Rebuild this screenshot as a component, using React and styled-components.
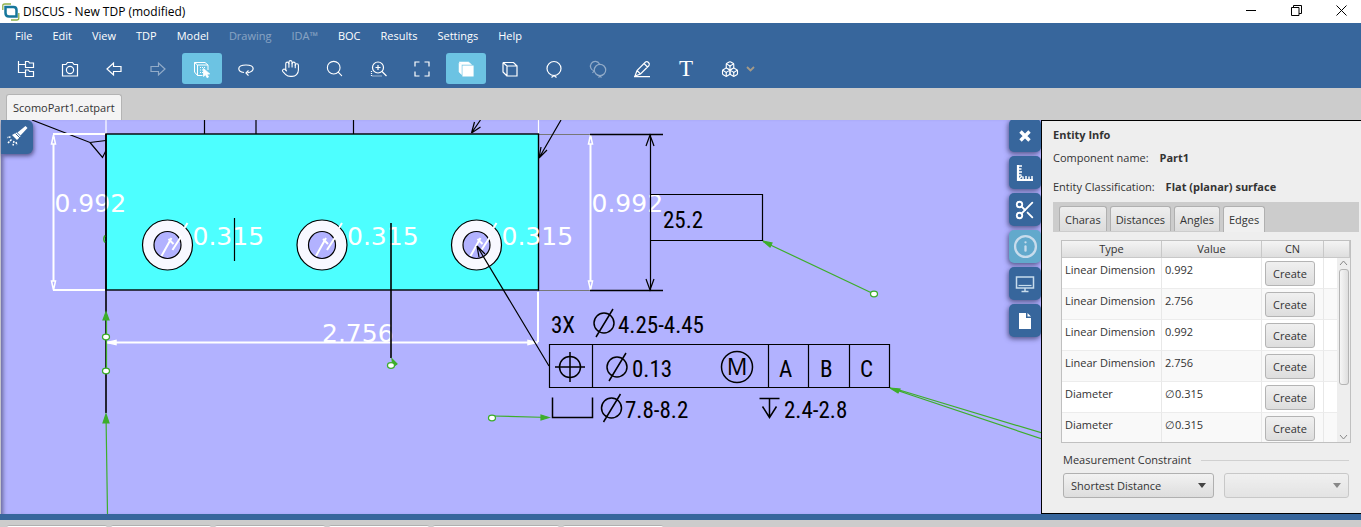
import styled, { createGlobalStyle } from "styled-components"
import { Boxes, Hand, Search, Scissors, Info } from "lucide-react"

const colors = {
  blue: '#37669c',
  active: '#6cc3e3',
  scene: '#b2b2ff',
  face: '#4dffff',
  green: '#3dae2b',
  text: '#333333',
}

const uiFont = '"Open Sans", "Noto Sans", sans-serif'
const noteFont = '"Roboto Condensed", "Open Sans Condensed", Roboto, sans-serif'

const menus = [
  { label: 'File' },
  { label: 'Edit' },
  { label: 'View' },
  { label: 'TDP' },
  { label: 'Model' },
  { label: 'Drawing', disabled: true },
  { label: 'IDA™', disabled: true },
  { label: 'BOC' },
  { label: 'Results' },
  { label: 'Settings' },
  { label: 'Help' },
]

const edges = [
  { type: 'Linear Dimension', value: '0.992' },
  { type: 'Linear Dimension', value: '2.756' },
  { type: 'Linear Dimension', value: '0.992' },
  { type: 'Linear Dimension', value: '2.756' },
  { type: 'Diameter', value: '∅0.315' },
  { type: 'Diameter', value: '∅0.315' },
]

const bottomTabs = [100, 100, 110, 100, 126, 100]

const Icon = ({ size = 20, children }) => (
  <svg width={size} height={size} viewBox="0 0 20 20" fill="none" stroke="currentColor" strokeWidth="1.2">
    {children}
  </svg>
)

const tools = [
  {
    label: 'Tree',
    icon: <Icon><path d="M2.5 2v11.500h7M2.500 5.500h7M9.500 2.500h3l1 1.500h4v4.500h-8zM9.500 11h3l1 1.500h4v5h-8z" /></Icon>,
  },
  {
    label: 'Snapshot',
    icon: <Icon><path d="M2.500 5.500h3.500l1.500-2h5l1.500 2h3.500v11.500h-15z" /><circle cx="10" cy="11" r="3.600" /></Icon>,
  },
  { label: 'Back', icon: <Icon><path d="M3 10l6.500-6v3.500h7.500v5h-7.500v3.500z" /></Icon> },
  { label: 'Forward', disabled: true, icon: <Icon><path d="M17 10l-6.500-6v3.500h-7.500v5h7.500v3.500z" /></Icon> },
  {
    label: 'Select',
    active: true,
    icon: (
      <Icon>
        <path d="M2.500 3.500l3 2.500h10.500l-3-2.500zM2.500 3.500v9.500l3 3.500M5.500 6v10.500h5M16 6v5" strokeWidth="1" />
        <path d="M8 8.500h6M8 11h3M8 13.500h3" strokeDasharray="1 1" />
        <path d="M11.500 9.500v8l2-1.700 1.600 3 1.400-.8-1.500-2.800 2.700-.3z" fill="currentColor" strokeWidth=".8" />
      </Icon>
    ),
  },
  {
    label: 'Rotate',
    icon: <Icon><path d="M8 13.500c-7-1-7.500-7.500 2-7.500s9 6.500 1.500 7.800" /><path d="M12.500 11.500l-2.500 2.500 2.500 2.700" /></Icon>,
  },
  { label: 'Pan', icon: <Hand size={19} strokeWidth={1.4} /> },
  { label: 'Zoom', icon: <Search size={19} strokeWidth={1.4} /> },
  {
    label: 'Zoom area',
    icon: (
      <Icon>
        <circle cx="10" cy="8.500" r="5.500" />
        <path d="M10 6v5M7.500 8.500h5M14 12.500l4.500 4.500" />
        <path d="M3.500 12v5h11" strokeDasharray="1 1" />
      </Icon>
    ),
  },
  { label: 'Fit', icon: <Icon><path d="M3 7.500V3h4.500M12.500 3H17v4.500M17 12.500V17h-4.500M7.500 17H3v-4.500" /></Icon> },
  {
    label: 'Shaded',
    active: true,
    icon: (
      <Icon>
        <path d="M7 7h10v10h-10z" fill="currentColor" />
        <path d="M3 3h9.500l3 2.500h-10zM3 4v9l2.500 2.500v-10z" fill="currentColor" strokeWidth=".5" />
      </Icon>
    ),
  },
  {
    label: 'Wireframe',
    icon: <Icon><path d="M7 7h10v10h-10zM3 3.500h10.500l3.500 3.500M3 3.500l4 3.500M3 3.500v9.500l4 4" /></Icon>,
  },
  { label: 'Balloon', icon: <Icon><circle cx="10" cy="9.500" r="7" /><path d="M7.500 18.500l2.500-2 2.500 2" /></Icon> },
  {
    label: 'Balloons',
    disabled: true,
    icon: (
      <Icon>
        <circle cx="12" cy="11" r="5.700" />
        <path d="M6.500 12a4.800 4.800 0 1 1 5-7M6 12l-1.500 2M10.500 18.500l1.500-1.500 1.500 1.500" />
      </Icon>
    ),
  },
  { label: 'Edit note', icon: <Icon><path d="M3 17l2-5.500 8.500-8.500q1.500-1 3 .5t.5 3L8.500 15zM12 4.500l3.500 3.500M5 11.500l3.500 3.500M2 17.700h16" /></Icon> },
  { label: 'Text', letter: true },
  { label: 'Assembly', icon: <Boxes size={18} strokeWidth={1.5} /> },
]

const sideTools = [
  {
    label: 'Close',
    icon: <Icon><path d="M5.500 5.500l9 9M14.500 5.500l-9 9" strokeWidth="3.400" /></Icon>,
  },
  {
    label: 'Measure',
    icon: (
      <Icon>
        <path d="M3 2v15h15" strokeWidth="2.200" />
        <path d="M4 3h3M4 6h2.500M4 9h3M4 12h2.500M8 16v-2.500M11 16v-3M14 16v-2.500M17 16v-3M3 17l4-4" strokeWidth="1.500" />
      </Icon>
    ),
  },
  {
    label: 'Section',
    icon: <Scissors size={22} strokeWidth={2} />,
  },
  { label: 'Info', active: true, icon: <Info size={25} strokeWidth={2.2} /> },
  {
    label: 'Display',
    dim: true,
    icon: <Icon><path d="M1.500 3h17v11h-17zM6.500 17.500h7M10 14v3" strokeWidth="1.500" /><path d="M3.500 11.500h13" /></Icon>,
  },
  {
    label: 'Document',
    icon: <Icon><path d="M4 2h7v5h5v11h-12zM12.500 2v3.500h3.500z" fill="currentColor" stroke="none" /></Icon>,
  },
]

const Logo = () => (
  <svg width="18" height="18" viewBox="0 0 18 18" fill="none">
    <path d="M.800 7V2.500q0-1.500 2-1.500H9M16.800 10v5q0 2-2 2H9" stroke="#8fb04a" strokeWidth="1.300" />
    <path d="M3.500 4h8q3 0 3 3v6.500h-7.500q-3.500 0-3.500-3.500z" stroke="#16779c" strokeWidth="2.500" />
  </svg>
)

const LinearDim = ({ x, label }) => (
  <g>
    <path d={`M${x} 137V287`} stroke="#fff" strokeWidth="2" />
    <path d={`M${x - 2} 144L${x} 135l2 9zM${x - 2} 281l2 9 2-9z`} fill={colors.scene} stroke="#fff" strokeWidth="1.500" />
    <SceneText x={x + 1} y="212">{label}</SceneText>
  </g>
)

const Hole = ({ x }) => (
  <g>
    <circle cx={x} cy="245" r="25" fill="#f8f8ff" stroke="#000" strokeWidth="1.200" />
    <circle cx={x} cy="245" r="13.500" fill={colors.scene} stroke="#000" strokeWidth="1.200" />
    <path d={`M${x - 6} 256l10-18M${x + 1} 239l5 5M${x + 5} 250l9-14M${x + 17} 228l3-5`} stroke="#fff" strokeWidth="2" />
    <SceneText x={x + 25} y="245">0.315</SceneText>
  </g>
)

const DiameterSign = ({ x, y }) => (
  <path
    d={`M${x - 10} ${y}a10 10 0 1 0 20 0a10 10 0 1 0 -20 0M${x - 8} ${y + 14}L${x + 9} ${y - 14}`}
    fill="none"
    stroke="#000"
    strokeWidth="1.500"
  />
)

const Anchor = ({ x, y }) => (
  <ellipse cx={x} cy={y} rx="3.500" ry="2.800" fill="#fff" stroke={colors.green} strokeWidth="1.300" />
)

const Scene = () => (
  <SceneSvg viewBox="0 120 1041 394" preserveAspectRatio="xMinYMin slice">
    <g fill="none" stroke="#000" strokeWidth="1.200">
      <path d="M32 120L90 142.500l16-2M90 142.500l12.500 15 3.500-7" />
      <path d="M204.500 120v14M256 120v14M353.500 120v14" />
      <path d="M106 120v14M538.500 120v14" stroke="#fff" />
      <path d="M538 134.500h52M538 290.500h52" stroke="#777" />
    </g>
    <rect x="106" y="134" width="432.500" height="156" fill={colors.face} stroke="#000" strokeWidth="1.400" />

    <g stroke="#fff" strokeWidth="2" fill="#fff">
      <path d="M53 134h52M53 290h52M538 292v50M107 342.500h431" />
      <path d="M107 342.500l9-2v4zM537 342.500l-9-2v4z" strokeWidth="1.500" />
    </g>
    <LinearDim x={53.5} label="0.992" />
    <LinearDim x={590.5} label="0.992" />
    <SceneText x="322" y="342">2.756</SceneText>
    <Hole x={167.5} />
    <Hole x={322} />
    <Hole x={476.5} />

    <g fill="none" stroke="#000" strokeWidth="1.200">
      <path d="M106 134v279" strokeWidth="1.600" />
      <path d="M234.500 218v43" />
      <path d="M391 223v135" strokeWidth="1.600" />
      <path d="M480.500 120l-9 13 3-11M471.500 133l9-6" />
      <path d="M561 120l-22 38 2-11M539 158l8-8" />
      <path d="M549 366L477 246l2 11M477 246l8 8" />
      <path d="M590 134.500h73M590 290.500h73" strokeWidth="1.500" />
      <path d="M650.500 135v155M646 146l4-11 4 11M646 279l4 11 4-11" />
      <path d="M650.500 194.500h112v46h-112" />
      <path d="M549.500 344.500h340v43h-340zM592.500 344.500v43M768.500 344.500v43M808.500 344.500v43M849.500 344.500v43" />
    </g>

    <g fill="none" stroke="#000" strokeWidth="1.500">
      <circle cx="570" cy="367" r="10.500" />
      <path d="M555 367h30M570 352v30" />
      <circle cx="737" cy="367" r="15.500" />
      <path d="M552.500 397.500v20h40v-20" />
      <path d="M759.500 398.500h20M769.500 399v19M762.500 406.500l7 11 7-11" />
    </g>
    <DiameterSign x={604} y={323} />
    <DiameterSign x={617} y={367} />
    <DiameterSign x={611.5} y={408} />

    <NoteText x="663" y="228">25.2</NoteText>
    <NoteText x="551" y="333">3X</NoteText>
    <NoteText x="618" y="333">4.25-4.45</NoteText>
    <NoteText x="632" y="377">0.13</NoteText>
    <ModifierText x="737" y="375">M</ModifierText>
    <NoteText x="779" y="377">A</NoteText>
    <NoteText x="820" y="377">B</NoteText>
    <NoteText x="860" y="377">C</NoteText>
    <NoteText x="625" y="418">7.8-8.2</NoteText>
    <NoteText x="784" y="418">2.4-2.8</NoteText>

    <g stroke={colors.green} strokeWidth="1.200" fill={colors.green}>
      <path d="M763 241.500L874 294M492 416l57 1.500M890 388l152 51M896 389l146 44" />
      <path d="M763 241l9 2-2 4zM549 417.500l-8-2.500v5zM890 388l10 1-2 4z" />
      <path d="M107.500 514l-1.500-100M106 414l-3 9h6zM106 312l-3 8h6zM106.500 320v51M392 359l5 5-4 3z" />
    </g>
    <path d="M105 235.500q-2.500 3.500 0 7" fill="none" stroke={colors.green} strokeWidth="1.500" />
    <Anchor x={874} y={294} />
    <Anchor x={492} y={418} />
    <Anchor x={106} y={337} />
    <Anchor x={106} y={371} />
    <Anchor x={391} y={365.5} />
  </SceneSvg>
)

const EntityPanel = () => (
  <Panel>
    <PanelTitle>Entity Info</PanelTitle>
    <Field>Component name: <b>Part1</b></Field>
    <Field>Entity Classification: <b>Flat (planar) surface</b></Field>
    <TabStrip>
      <PanelTab>Charas</PanelTab>
      <PanelTab>Distances</PanelTab>
      <PanelTab>Angles</PanelTab>
      <PanelTab $selected>Edges</PanelTab>
    </TabStrip>
    <TableBox>
      <EdgeTable>
        <colgroup>
          <col width="100" />
          <col width="100" />
          <col width="62" />
          <col />
        </colgroup>
        <thead>
          <tr><th>Type</th><th>Value</th><th>CN</th><th /></tr>
        </thead>
        <tbody>
          {edges.map((edge, i) => (
            <tr key={i}>
              <td>{edge.type}</td>
              <td>{edge.value}</td>
              <td><CreateButton>Create</CreateButton></td>
              <td />
            </tr>
          ))}
        </tbody>
      </EdgeTable>
      <ScrollBar>
        <svg width="9" height="6" viewBox="0 0 9 6"><path d="M1 5l3.500-4L8 5" /></svg>
        <ScrollThumb />
        <svg width="9" height="6" viewBox="0 0 9 6"><path d="M1 1l3.500 4L8 1" /></svg>
      </ScrollBar>
    </TableBox>
    <Constraint>
      <Legend><label htmlFor="constraint">Measurement Constraint</label></Legend>
      <SelectRow>
        <SelectBox $grow={6}>
          <select id="constraint"><option>Shortest Distance</option></select>
          <svg width="8" height="5" viewBox="0 0 8 5"><path d="M0 0h8L4 5z" /></svg>
        </SelectBox>
        <SelectBox $grow={5} $disabled>
          <select aria-label="Constraint target" disabled />
          <svg width="8" height="5" viewBox="0 0 8 5"><path d="M0 0h8L4 5z" /></svg>
        </SelectBox>
      </SelectRow>
    </Constraint>
  </Panel>
)

const App = () => {
  return (
    <Window>
      <GlobalStyle />
      <TitleBar>
        <Logo />
        <h1>DISCUS - New TDP (modified)</h1>
        <WindowButton aria-label="Minimize">
          <svg width="11" height="11" viewBox="0 0 11 11"><path d="M0 5.500h10" /></svg>
        </WindowButton>
        <WindowButton aria-label="Restore">
          <svg width="11" height="11" viewBox="0 0 11 11"><path d="M.500 2.500h7.500v8h-7.500zM2.500 2.500v-2h8v8h-2.500" /></svg>
        </WindowButton>
        <WindowButton aria-label="Close">
          <svg width="11" height="11" viewBox="0 0 11 11"><path d="M.500.500l10 10M10.500.500l-10 10" /></svg>
        </WindowButton>
      </TitleBar>
      <Header>
        <MenuBar>
          {menus.map((menu) => (
            <MenuItem key={menu.label} disabled={menu.disabled}>{menu.label}</MenuItem>
          ))}
        </MenuBar>
        <ToolBar>
          {tools.map((tool) => (
            <ToolButton key={tool.label} aria-label={tool.label} disabled={tool.disabled} $active={tool.active}>
              {tool.letter ? <ToolLetter>T</ToolLetter> : tool.icon}
            </ToolButton>
          ))}
          <MoreButton aria-label="More">
            <svg width="9" height="6" viewBox="0 0 9 6" fill="none" stroke="#a49a88" strokeWidth="1.800"><path d="M1 1l3.500 3.500L8 1" /></svg>
          </MoreButton>
        </ToolBar>
      </Header>
      <FileTabs>
        <FileTab>ScomoPart1.catpart</FileTab>
      </FileTabs>
      <Main>
        <Viewport>
          <Scene />
          <LightButton aria-label="Light">
            <svg width="24" height="24" viewBox="0 0 24 24" fill="#fff" stroke="#fff">
              <path d="M20.500 2l2 2-7 7.500-3-3z" stroke="none" />
              <path d="M11.500 8.500l4 4-3.500 3.500-5-5z" stroke="none" />
              <path d="M10.500 9.500l4.500 4.500" stroke={colors.blue} />
              <path d="M5.500 13l-3.500.5M6.500 15.500l-4 4M9 17l-1 4.500M11 18l1 3" strokeWidth="1.500" strokeDasharray="2 1" />
            </svg>
          </LightButton>
          <SideTools>
            {sideTools.map((tool) => (
              <SideButton key={tool.label} aria-label={tool.label} $active={tool.active} $dim={tool.dim}>
                {tool.icon}
              </SideButton>
            ))}
          </SideTools>
        </Viewport>
        <EntityPanel />
      </Main>
      <BottomTabs>
        {bottomTabs.map((width, i) => <BottomTab key={i} $width={width} />)}
      </BottomTabs>
    </Window>
  )
}

const GlobalStyle = createGlobalStyle`
  * {
    box-sizing: border-box;
  }

  body {
    margin: 0;
    overflow: hidden;
    font-family: ${uiFont};
    font-size: 11px;
    color: ${colors.text};
  }

  button, select {
    font: inherit;
    color: inherit;
    padding: 0;
    border: 0;
    background: none;
  }
`

const Window = styled.div`
  display: flex;
  flex-direction: column;
  height: 100vh;
  background: #cccccc;
`

const TitleBar = styled.header`
  display: flex;
  align-items: center;
  gap: 10px;
  height: 23px;
  padding: 0 2px;
  background: #fff;
  color: #000;

  h1 {
    flex: 1;
    margin: 0 0 0 -7px;
    font-size: 12px;
    font-weight: 400;
  }
`

const WindowButton = styled.button`
  width: 35px;
  height: 20px;

  svg {
    display: block;
    margin: 0 auto 2px;
    fill: none;
    stroke: #000;
  }
`

const Header = styled.div`
  height: 65px;
  background: ${colors.blue};
  color: #fff;
`

const MenuBar = styled.nav`
  display: flex;
  gap: 20px;
  height: 25px;
  padding: 0 15px;
`

const MenuItem = styled.button`
  opacity: ${(props) => (props.disabled ? 0.4 : 1)};
`

const ToolBar = styled.div`
  display: flex;
  gap: 4px;
  padding: 5px 6px;
`

const ToolButton = styled.button`
  display: flex;
  align-items: center;
  justify-content: center;
  width: 40px;
  height: 31px;
  border-radius: 3px;
  background: ${(props) => (props.$active ? colors.active : 'transparent')};
  opacity: ${(props) => (props.disabled ? 0.45 : 1)};
`

const ToolLetter = styled.span`
  font-family: "Liberation Serif", "DejaVu Serif", serif;
  font-size: 23px;
  line-height: 22px;
`

const MoreButton = styled.button`
  display: flex;
  align-items: center;
  margin-left: -8px;
`

const FileTabs = styled.div`
  display: flex;
  align-items: flex-end;
  height: 32px;
  padding: 0 6px;
`

const FileTab = styled.button`
  height: 26px;
  padding: 0 6px;
  border: 1px solid #b4b4b4;
  border-bottom: 0;
  border-radius: 3px 3px 0 0;
  background: #f4f4f4;
`

const Main = styled.main`
  display: flex;
  flex: 1;
  min-height: 0;
  border-bottom: 6px solid ${colors.blue};
`

const Viewport = styled.section`
  position: relative;
  flex: 1;
  min-width: 0;
  overflow: hidden;
  background: ${colors.scene};

  &::after {
    content: "";
    position: absolute;
    inset: 0;
    border-left: 1px solid #c4c4cc;
    box-shadow: inset 5px 0 4px -3px #66669a;
    pointer-events: none;
  }
`

const SceneSvg = styled.svg`
  display: block;
  width: 100%;
  height: 100%;
`

const SceneText = styled.text`
  font-family: "DejaVu Sans", sans-serif;
  font-size: 25px;
  fill: #fff;
`

const NoteText = styled.text`
  font-family: ${noteFont};
  font-size: 23px;
  fill: #000;
`

const ModifierText = styled.text`
  font-family: ${uiFont};
  font-size: 23px;
  text-anchor: middle;
  fill: #000;
`

const LightButton = styled.button`
  position: absolute;
  z-index: 1;
  left: 1px;
  top: 0;
  width: 32px;
  height: 34px;
  padding: 4px;
  border-radius: 0 6px 6px 0;
  background: ${colors.blue};
  box-shadow: 1px 2px 4px #55558a;
`

const SideTools = styled.div`
  position: absolute;
  z-index: 1;
  right: 0;
  top: -1px;
  display: flex;
  flex-direction: column;
  gap: 4px;
`

const SideButton = styled.button`
  display: flex;
  align-items: center;
  justify-content: center;
  width: 32px;
  height: 33px;
  border-radius: 5px;
  background: ${(props) => (props.$active ? '#62a9cc' : colors.blue)};
  color: ${(props) => (props.$active || props.$dim ? '#c8dcec' : '#fff')};
  box-shadow: -1px 2px 5px #55558a;
`

const Panel = styled.aside`
  display: flex;
  flex-direction: column;
  flex: 0 0 320px;
  padding: 6px 2px 0 11px;
  border: 1px solid #000;
  border-right: 0;
  background: #eeeeee;
`

const PanelTitle = styled.h2`
  margin: 0 0 7px;
  font-size: 11px;
  line-height: 16px;
  font-weight: 700;
`

const Field = styled.p`
  margin: 0 0 13px;
  line-height: 16px;

  b {
    margin-left: 8px;
  }
`

const TabStrip = styled.div`
  display: flex;
  align-items: flex-end;
  gap: 3px;
  height: 30px;
  margin-top: -6px;
  padding: 0 6px;
  background: #cccccc;
`

const PanelTab = styled.button`
  height: ${(props) => (props.$selected ? 26 : 25)}px;
  margin-bottom: ${(props) => (props.$selected ? 0 : 1)}px;
  padding: 0 5px;
  border: 1px solid #b0b0b0;
  border-bottom: 0;
  border-radius: 3px 3px 0 0;
  background: ${(props) => (props.$selected ? '#f0f0f0' : 'linear-gradient(#eeeeee, #dcdcdc)')};
`

const TableBox = styled.div`
  position: relative;
  height: 203px;
  margin: 8px 8px 0;
  overflow: hidden;
  border: 1px solid #c0c0c0;
  background: #fff;
`

const EdgeTable = styled.table`
  width: 100%;
  table-layout: fixed;
  border-collapse: separate;
  border-spacing: 0;

  th {
    height: 17px;
    padding: 0;
    border-right: 1px solid #c8c8c8;
    border-bottom: 1px solid #c8c8c8;
    background: linear-gradient(#f4f4f4, #dedede);
    font-weight: 400;
    line-height: 16px;
  }

  td {
    height: 31px;
    padding: 3px 3px 0;
    border-right: 1px solid #e8e8e8;
    border-bottom: 1px solid #ececec;
    line-height: 18px;
    vertical-align: top;
    white-space: nowrap;
  }

  tr:nth-child(even) td {
    background: #f9f9f9;
  }
`

const CreateButton = styled.button`
  display: block;
  width: 50px;
  height: 25px;
  border: 1px solid #b4b4b4;
  border-radius: 3px;
  background: linear-gradient(#f0f0f0, #dddddd);
`

const ScrollBar = styled.div`
  position: absolute;
  top: 17px;
  right: 0;
  bottom: 0;
  display: flex;
  flex-direction: column;
  align-items: center;
  justify-content: space-between;
  width: 13px;
  padding: 2px 0;
  background: #eeeeee;

  svg {
    fill: none;
    stroke: #888;
  }
`

const ScrollThumb = styled.div`
  width: 10px;
  height: 116px;
  margin: 3px 0 auto;
  border: 1px solid #b4b4b4;
  border-radius: 3px;
  background: linear-gradient(90deg, #f6f6f6, #dedede);
`

const Constraint = styled.div`
  margin: 8px 10px 0;
`

const Legend = styled.div`
  display: flex;
  align-items: center;
  gap: 10px;
  line-height: 18px;

  &::after {
    content: "";
    flex: 1;
    height: 1px;
    background: #d0d0d0;
  }
`

const SelectRow = styled.div`
  display: flex;
  gap: 10px;
  margin-top: 4px;
`

const SelectBox = styled.div`
  position: relative;
  flex: ${(props) => props.$grow} 1 0;
  opacity: ${(props) => (props.$disabled ? 0.6 : 1)};

  select {
    display: block;
    width: 100%;
    height: 25px;
    padding: 0 7px;
    appearance: none;
    border: 1px solid #b0b0b0;
    border-radius: 3px;
    background: linear-gradient(#f2f2f2, #dddddd);
    opacity: 1;
  }

  svg {
    position: absolute;
    top: 10px;
    right: 8px;
    fill: #444;
    pointer-events: none;
  }
`

const BottomTabs = styled.div`
  display: flex;
  gap: 4px;
  height: 7px;
  padding: 5px 7px 0;
`

const BottomTab = styled.div`
  width: ${(props) => props.$width}px;
  border-top: 1px solid #b0b0b0;
  border-radius: 2px 2px 0 0;
  background: #fff;
`

export default App
